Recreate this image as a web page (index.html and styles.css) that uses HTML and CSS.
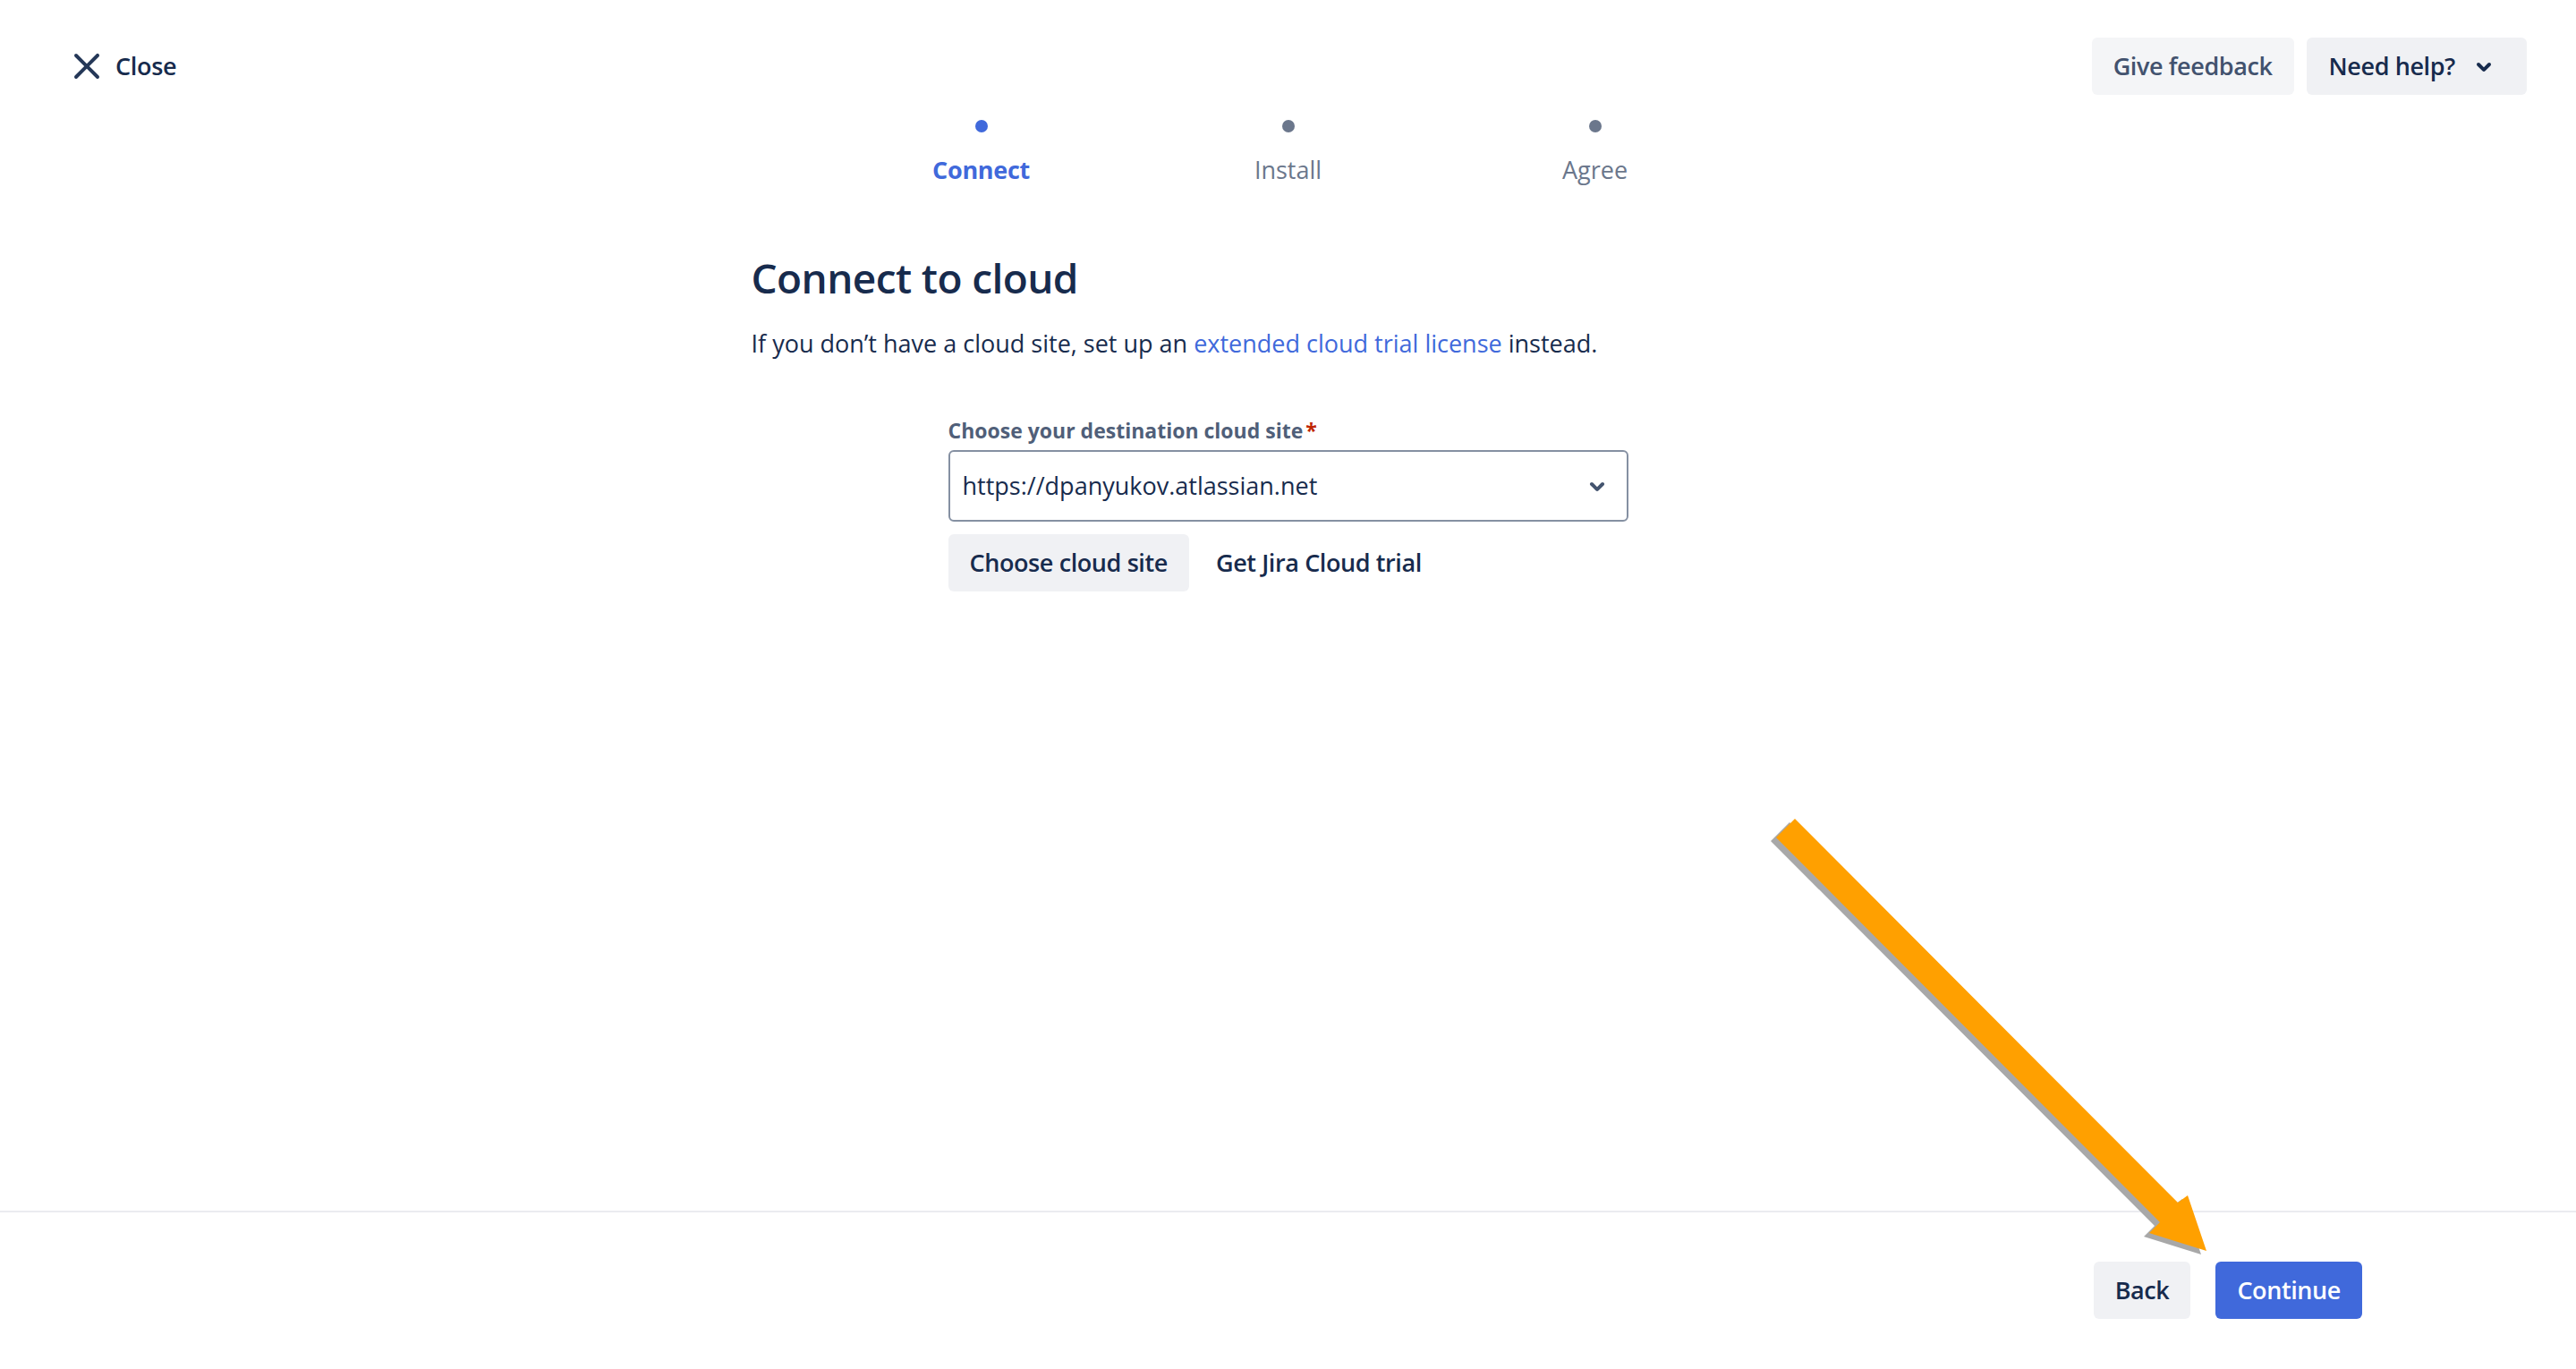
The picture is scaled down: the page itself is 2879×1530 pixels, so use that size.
FILE: index.html
```html
<!DOCTYPE html>
<html lang="en">
<head>
<meta charset="utf-8">
<title>Connect to cloud</title>
<link rel="stylesheet" href="styles.css">
</head>
<body>
<div class="page">
  <header class="topbar">
    <a class="close" href="#">
      <svg class="icon48" viewBox="0 0 24 24"><path fill="currentColor" d="M12 10.586L6.707 5.293a1 1 0 00-1.414 1.414L10.586 12l-5.293 5.293a1 1 0 001.414 1.414L12 13.414l5.293 5.293a1 1 0 001.414-1.414L13.414 12l5.293-5.293a1 1 0 10-1.414-1.414L12 10.586z"/></svg>
      <span>Close</span>
    </a>
    <div class="top-actions">
      <button class="btn btn-light">Give feedback</button>
      <button class="btn btn-help">Need help?<svg class="icon48 chev" viewBox="0 0 24 24"><path fill="currentColor" d="M8.292 10.293a1.009 1.009 0 000 1.419l2.939 2.965c.218.215.5.322.779.322s.556-.107.769-.322l2.93-2.955a1.01 1.01 0 000-1.419.987.987 0 00-1.406 0l-2.298 2.317-2.307-2.327a.99.99 0 00-1.406 0z"/></svg></button>
    </div>
  </header>

  <main class="main">
    <ol class="steps">
      <li class="step active"><span class="dot"></span><span class="step-label">Connect</span></li>
      <li class="step"><span class="dot"></span><span class="step-label">Install</span></li>
      <li class="step"><span class="dot"></span><span class="step-label">Agree</span></li>
    </ol>

    <section class="content">
      <h1>Connect to cloud</h1>
      <p class="lead">If you don’t have a cloud site, set up an <a href="#">extended cloud trial license</a> instead.</p>

      <div class="form">
        <label class="field-label">Choose your destination cloud site<span class="req">*</span></label>
        <div class="select">
          <span class="select-value">https://dpanyukov.atlassian.net</span>
          <svg class="icon48 select-chev" viewBox="0 0 24 24"><path fill="currentColor" d="M8.292 10.293a1.009 1.009 0 000 1.419l2.939 2.965c.218.215.5.322.779.322s.556-.107.769-.322l2.93-2.955a1.01 1.01 0 000-1.419.987.987 0 00-1.406 0l-2.298 2.317-2.307-2.327a.99.99 0 00-1.406 0z"/></svg>
        </div>
        <div class="form-actions">
          <button class="btn btn-default">Choose cloud site</button>
          <button class="btn btn-subtle">Get Jira Cloud trial</button>
        </div>
      </div>
    </section>
  </main>

  <footer class="footer">
    <button class="btn btn-default">Back</button>
    <button class="btn btn-primary">Continue</button>
  </footer>

  <svg class="annotation" viewBox="0 0 2879 1530" width="2879" height="1530">
    <polygon fill="#a8a8a8" points="2000,919 2428,1348 2439,1340 2460,1402 2396,1382 2408,1370 1979,940"/>
    <polygon fill="#ffa000" points="2006,915 2434,1344 2445,1336 2466,1398 2402,1378 2414,1366 1985,936"/>
  </svg>
</div>
</body>
</html>
```
FILE: styles.css
```css
* { box-sizing: border-box; }

html, body {
  margin: 0;
  padding: 0;
  background: #ffffff;
}

body {
  font-family: "Open Sans", "Noto Sans", sans-serif;
  font-size: 27px;
  line-height: 40px;
  color: #172b4d;
}

.page {
  position: relative;
  display: flex;
  flex-direction: column;
  min-height: 100vh;
  overflow: hidden;
}

/* Top bar */
.topbar {
  display: flex;
  justify-content: space-between;
  align-items: center;
  padding: 42px 55px 0 73px;
}

.close {
  display: flex;
  align-items: center;
  gap: 8px;
  color: #172b4d;
  text-decoration: none;
  font-weight: 600;
  letter-spacing: -0.3px;
}

.icon48 {
  width: 48px;
  height: 48px;
  flex: none;
  display: block;
}

.close .icon48 { color: #253858; }

.top-actions {
  display: flex;
  gap: 14px;
}

.btn {
  display: inline-flex;
  align-items: center;
  height: 64px;
  padding: 0 24px;
  border: 0;
  border-radius: 6px;
  font-family: inherit;
  font-size: 27px;
  font-weight: 600;
  letter-spacing: -0.4px;
  line-height: 40px;
  color: #172b4d;
  background: #f0f1f4;
  white-space: nowrap;
  cursor: pointer;
}

.btn-light {
  background: #f4f5f7;
  color: #42526e;
}

.btn-help {
  background: #f0f1f4;
  padding-left: 25px;
}

.btn-help .chev {
  margin-left: 8px;
  color: #172b4d;
}

.btn-default { background: #f0f1f4; color: #172b4d; }

.btn-subtle { background: transparent; color: #172b4d; }

.btn-primary { background: #4069db; color: #ffffff; }

/* Steps */
.steps {
  list-style: none;
  margin: 28px 0 0;
  padding: 0;
  display: grid;
  grid-template-columns: repeat(3, 343px);
  justify-content: center;
}

.step {
  display: flex;
  flex-direction: column;
  align-items: center;
}

.dot {
  width: 14px;
  height: 14px;
  border-radius: 50%;
  background: #6b778c;
}

.step-label {
  margin-top: 22px;
  color: #6b778c;
}

.step.active .dot { background: #4069db; }
.step.active .step-label { color: #4069db; font-weight: 700; letter-spacing: -0.3px; }

/* Content */
.content {
  width: 1200px;
  margin: 0 auto;
}

h1 {
  margin: 72px 0 0;
  font-size: 46px;
  line-height: 56px;
  font-weight: 600;
  letter-spacing: -0.6px;
  color: #172b4d;
}

.lead {
  margin: 26px 0 0;
}

.lead a {
  color: #4069db;
  text-decoration: none;
}

.form {
  width: 760px;
  margin: 61px auto 0;
}

.field-label {
  display: block;
  font-size: 23px;
  line-height: 32px;
  font-weight: 700;
  color: #505f79;
}

.req {
  color: #bf2600;
  margin-left: 3px;
}

.select {
  margin-top: 6px;
  height: 80px;
  border: 2px solid #8590a2;
  border-radius: 6px;
  display: flex;
  align-items: center;
  justify-content: space-between;
  padding: 0 9px 0 14px;
}

.select-chev { color: #44546f; }

.form-actions {
  display: flex;
  gap: 6px;
  margin-top: 14px;
}

/* Footer */
.footer {
  margin-top: auto;
  border-top: 2px solid #ebecf0;
  padding: 55px 239px 56px 0;
  display: flex;
  justify-content: flex-end;
  gap: 28px;
}

/* Annotation overlay */
.annotation {
  position: absolute;
  left: 0;
  top: 0;
  pointer-events: none;
}
```
